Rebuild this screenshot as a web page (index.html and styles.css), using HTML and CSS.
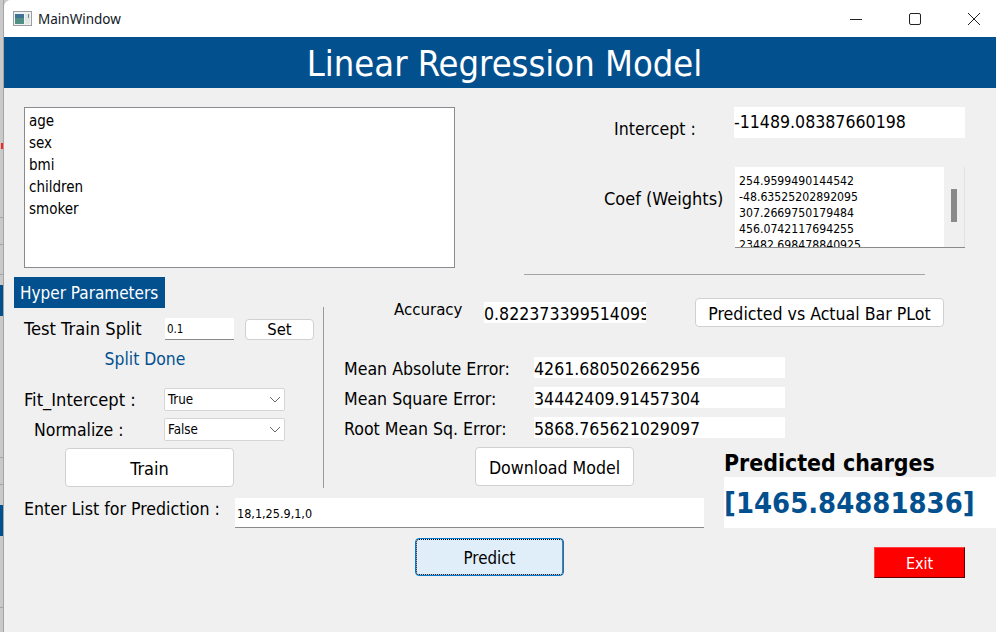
FILE: index.html
```html
<!DOCTYPE html>
<html lang="en">
<head>
    <meta charset="UTF-8">
    <meta name="viewport" content="width=device-width, initial-scale=1.0">
    <title>MainWindow</title>
    <link rel="stylesheet" href="styles.css">
</head>
<body>
    <div class="desktop-edge"></div>
    <div class="window">
        <div class="titlebar">
            <svg class="app-icon" width="20" height="16" viewBox="0 0 20 16">
                <rect x="0.5" y="0.5" width="18" height="14" fill="#f2f2f2" stroke="#9a9ea2"/>
                <rect x="2" y="3" width="9" height="10" fill="#4f8f84"/>
                <rect x="2" y="3" width="9" height="4" fill="#3f7396"/>
                <rect x="12" y="3" width="5" height="10" fill="#dfe6e4"/>
                <rect x="15" y="3" width="1" height="4" fill="#6f8f88"/>
            </svg>
            <span class="window-name">MainWindow</span>
            <div class="window-controls">
                <svg width="14" height="14" viewBox="0 0 14 14"><path d="M1 7.5H13" stroke="#222" fill="none"/></svg>
                <svg width="14" height="14" viewBox="0 0 14 14"><rect x="1.5" y="1.5" width="11" height="11" rx="1.5" stroke="#222" fill="none"/></svg>
                <svg width="14" height="14" viewBox="0 0 14 14"><path d="M1 1L13 13M13 1L1 13" stroke="#222" fill="none"/></svg>
            </div>
        </div>

        <h1 class="banner">Linear Regression Model</h1>

        <main class="content">
            <!-- Columns list and fitted values -->
            <section class="top">
                <ul class="column-list">
                    <li>age</li>
                    <li>sex</li>
                    <li>bmi</li>
                    <li>children</li>
                    <li>smoker</li>
                </ul>
                <div class="fit-info">
                    <div class="intercept-row">
                        <span class="intercept-label">Intercept :</span>
                        <output class="intercept-value">-11489.08387660198</output>
                    </div>
                    <div class="coef-row">
                        <span class="coef-label">Coef (Weights)</span>
                        <div class="coef-box">
                            <div class="coef-text">
                                254.9599490144542<br>
                                -48.63525202892095<br>
                                307.2669750179484<br>
                                456.0742117694255<br>
                                23482.698478840925
                            </div>
                            <div class="coef-scroll"><div class="coef-thumb"></div></div>
                        </div>
                    </div>
                    <div class="divider"></div>
                </div>
            </section>

            <section class="workspace">
                <div class="hyper">
                    <div class="hyper-title">Hyper Parameters</div>
                    <div class="split-row">
                        <span>Test Train Split</span>
                        <div class="field split-input">0.1</div>
                        <button class="btn set-btn">Set</button>
                    </div>
                    <div class="split-status">Split Done</div>
                    <div class="combo-row">
                        <span class="combo-label">Fit_Intercept :</span>
                        <div class="combo">True<svg width="12" height="7" viewBox="0 0 12 7"><path d="M1 1L6 6L11 1" stroke="#666" fill="none"/></svg></div>
                    </div>
                    <div class="combo-row second">
                        <span class="combo-label normalize">Normalize :</span>
                        <div class="combo">False<svg width="12" height="7" viewBox="0 0 12 7"><path d="M1 1L6 6L11 1" stroke="#666" fill="none"/></svg></div>
                    </div>
                    <button class="btn train-btn">Train</button>
                </div>

                <div class="accuracy-row">
                    <span class="accuracy-label">Accuracy</span>
                    <div class="accuracy-value">0.8223733995140995</div>
                    <button class="btn plot-btn">Predicted vs Actual Bar PLot</button>
                </div>

                <div class="errors">
                    <div class="error-row"><span class="error-label">Mean Absolute Error:</span><span class="error-value">4261.680502662956</span></div>
                    <div class="error-row"><span class="error-label">Mean Square Error:</span><span class="error-value">34442409.91457304</span></div>
                    <div class="error-row"><span class="error-label">Root Mean Sq. Error:</span><span class="error-value">5868.765621029097</span></div>
                    <button class="btn download-btn">Download Model</button>
                </div>

                <div class="prediction-form">
                    <div class="enter-row">
                        <span class="enter-label">Enter List for Prediction :</span>
                        <div class="field enter-input">18,1,25.9,1,0</div>
                    </div>
                    <button class="btn predict-btn">Predict</button>
                </div>

                <div class="result">
                    <div class="result-title">Predicted charges</div>
                    <div class="result-value">[1465.84881836]</div>
                    <button class="exit-btn">Exit</button>
                </div>
            </section>
        </main>
    </div>
</body>
</html>
```

FILE: styles.css
```css
* {
    box-sizing: border-box;
}
html, body {
    height: 100%;
}
body {
    margin: 0;
    display: flex;
    overflow: hidden;
    background-color: #c9c9c9;
    color: #000;
    font-family: 'DejaVu Sans', Verdana, sans-serif;
    font-stretch: condensed;
    font-size: 17.6px;
}
.desktop-edge {
    width: 4px;
    flex-shrink: 0;
    background:
        linear-gradient(#ff2020, #ff2020) 1px 143px / 2px 6px no-repeat,
        linear-gradient(#03508f, #03508f) 0 285px / 3px 31px no-repeat,
        linear-gradient(#03508f, #03508f) 0 505px / 3px 31px no-repeat,
        linear-gradient(#a5a5a5, #a5a5a5) 0 217px / 3px 1px no-repeat,
        linear-gradient(#a5a5a5, #a5a5a5) 0 244px / 3px 1px no-repeat,
        linear-gradient(#a5a5a5, #a5a5a5) 0 274px / 3px 1px no-repeat,
        linear-gradient(#a5a5a5, #a5a5a5) 0 457px / 3px 1px no-repeat,
        linear-gradient(#a5a5a5, #a5a5a5) 0 484px / 3px 1px no-repeat,
        linear-gradient(#a5a5a5, #a5a5a5) 0 607px / 3px 1px no-repeat,
        linear-gradient(to right, #c9c9c9 3px, #a5a5a5 3px);
}
.window {
    flex: 1;
    display: flex;
    flex-direction: column;
    background-color: #f0f0f0;
    border-top-left-radius: 7px;
    overflow: hidden;
}
.titlebar {
    height: 37px;
    display: flex;
    align-items: center;
    padding-left: 9px;
    background-color: #fff;
}
.window-name {
    margin-left: 5px;
    font-family: 'Noto Sans', sans-serif;
    font-stretch: normal;
    font-size: 13.5px;
    color: #10181f;
}
.window-controls {
    margin-left: auto;
    margin-right: 15px;
    display: flex;
    gap: 45px;
}
.banner {
    height: 51px;
    margin: 0;
    padding-left: 9px;
    background-color: #03508f;
    color: #fff;
    font-size: 36px;
    font-weight: normal;
    line-height: 53px;
    text-align: center;
}
.content {
    flex: 1;
    padding: 19px 0 0 10px;
}

/* top part */
.top {
    display: flex;
    height: 170px;
}
.column-list {
    list-style: none;
    width: 431px;
    height: 161px;
    margin: 0 0 0 10px;
    padding: 2px 4px;
    background-color: #fff;
    border: 1px solid #8a8a90;
}
.column-list li {
    height: 22px;
    line-height: 22px;
    font-size: 15px;
}
.fit-info {
    margin-left: 69px;
    width: 441px;
}
.intercept-row {
    display: flex;
    align-items: center;
    height: 31px;
}
.intercept-label {
    margin: 12px 0 0 90px;
    width: 120px;
}
.intercept-value {
    width: 231px;
    height: 31px;
    line-height: 31px;
    background-color: #fff;
}
.coef-row {
    display: flex;
    align-items: center;
    margin-top: 29px;
}
.coef-label {
    margin: 0 0 18px 80px;
    width: 131px;
    font-size: 18px;
    white-space: nowrap;
}
.coef-box {
    width: 230px;
    height: 81px;
    display: flex;
    overflow: hidden;
    border-bottom: 1px solid #8a8a8a;
}
.coef-text {
    width: 209px;
    padding: 6px 4px 0;
    background-color: #fff;
    font-size: 12.2px;
    line-height: 16px;
}
.coef-scroll {
    width: 21px;
    padding: 22px 0 0 7px;
    background-color: #f0f0f0;
    border-right: 1px solid #e2e2e2;
}
.coef-thumb {
    width: 6px;
    height: 33px;
    background-color: #8a8a8a;
}
.divider {
    width: 401px;
    height: 1px;
    margin-top: 26px;
    background-color: #a5a5a5;
}

/* lower part */
.workspace {
    display: grid;
    grid-template-columns: 330px 380px 272px;
    grid-template-rows: 68px 143px auto;
}
.btn {
    display: block;
    padding: 2px 0 0;
    background-color: #fff;
    border: 1px solid #d0d0d0;
    border-radius: 4px;
    color: #000;
    font: inherit;
}
.hyper {
    grid-column: 1;
    grid-row: 1 / 3;
    width: 310px;
    height: 211px;
    background: linear-gradient(#9a9a9a, #9a9a9a) 309px 30px / 1px 181px no-repeat;
}
.hyper-title {
    width: 151px;
    height: 31px;
    padding-left: 6px;
    line-height: 33px;
    background-color: #03508f;
    color: #fff;
    font-size: 17px;
}
.split-row {
    display: flex;
    align-items: center;
    height: 22px;
    margin: 10px 0 0 10px;
}
.split-row span {
    width: 141px;
    flex-shrink: 0;
    margin-bottom: 2px;
    font-size: 18.2px;
    white-space: nowrap;
}
.split-input {
    width: 69px;
    height: 22px;
    line-height: 22px;
    padding-left: 2px;
    font-size: 11.5px;
}
.field {
    background-color: #fff;
    border-bottom: 1px solid #8a8a8a;
}
.set-btn {
    width: 69px;
    height: 21px;
    margin-left: 11px;
    padding: 0;
    font-size: 16.5px;
}
.split-status {
    width: 262px;
    margin-top: 9px;
    text-align: center;
    color: #03508f;
    line-height: 20px;
    font-size: 17.4px;
}
.combo-row {
    display: flex;
    align-items: center;
    margin-top: 19px;
    margin-left: 10px;
}
.combo-row.second {
    margin-top: 7px;
}
.combo-label {
    width: 140px;
    flex-shrink: 0;
    white-space: nowrap;
    font-size: 18.2px;
}
.normalize {
    padding-left: 10px;
    font-size: 17.5px;
}
.combo {
    width: 121px;
    height: 23px;
    display: flex;
    align-items: center;
    justify-content: space-between;
    padding: 0 3px 0 3px;
    background-color: #fff;
    border: 1px solid #d5d5d5;
    border-radius: 2px;
    font-size: 13.3px;
}
.train-btn {
    width: 169px;
    height: 39px;
    margin: 7px 0 0 51px;
    padding: 2px 0 0;
    font-size: 18px;
}
.accuracy-row {
    grid-column: 2 / 4;
    grid-row: 1;
    display: flex;
    align-items: flex-start;
    padding-top: 21px;
}
.accuracy-label {
    width: 140px;
    flex-shrink: 0;
    padding-left: 50px;
    margin-top: 1px;
    font-size: 16.7px;
}
.accuracy-value {
    width: 162px;
    height: 21px;
    margin-top: 4px;
    overflow: hidden;
    white-space: nowrap;
    background-color: #fff;
    line-height: 24px;
}
.plot-btn {
    width: 249px;
    height: 29px;
    margin-left: 49px;
}
.errors {
    grid-column: 2;
    grid-row: 2;
    padding-top: 12px;
}
.error-row {
    display: flex;
    height: 21px;
    margin-bottom: 9px;
    line-height: 24px;
}
.error-label {
    width: 190px;
    flex-shrink: 0;
    white-space: nowrap;
}
.error-value {
    width: 251px;
    flex-shrink: 0;
    background-color: #fff;
    white-space: nowrap;
}
.download-btn {
    width: 159px;
    height: 39px;
    margin: 1px 0 0 131px;
    padding: 3px 0 0;
}
.prediction-form {
    grid-column: 1 / 3;
    grid-row: 3;
    padding-bottom: 2px;
}
.enter-row {
    display: flex;
    align-items: center;
    margin-top: 10px;
}
.enter-label {
    width: 211px;
    flex-shrink: 0;
    margin-left: 10px;
    padding-bottom: 8px;
    white-space: nowrap;
}
.enter-input {
    width: 469px;
    height: 30px;
    padding-left: 2px;
    line-height: 31px;
    font-size: 12.5px;
}
.predict-btn {
    width: 149px;
    height: 38px;
    margin: 10px 0 0 401px;
    padding: 2px 0 0;
    background-color: #e0eef9;
    border: 1px solid #0078d4;
    outline: 1px dotted #000;
    outline-offset: -2px;
    font-size: 16.8px;
}
.result {
    grid-column: 3;
    grid-row: 2 / 4;
    align-self: end;
}
.result-title {
    height: 28px;
    font-size: 22.9px;
    font-weight: bold;
    line-height: 29px;
    white-space: nowrap;
}
.result-value {
    height: 51px;
    background-color: #fff;
    color: #03508f;
    font-size: 28.9px;
    font-weight: bold;
    line-height: 53px;
    white-space: nowrap;
}
.exit-btn {
    display: block;
    width: 91px;
    height: 31px;
    margin: 19px 0 0 150px;
    padding: 2px 0 0;
    background-color: #ff0000;
    border: 1px solid;
    border-color: #ff4040 #600000 #600000 #ff4040;
    color: #fff;
    font: inherit;
    font-size: 16px;
}
```
